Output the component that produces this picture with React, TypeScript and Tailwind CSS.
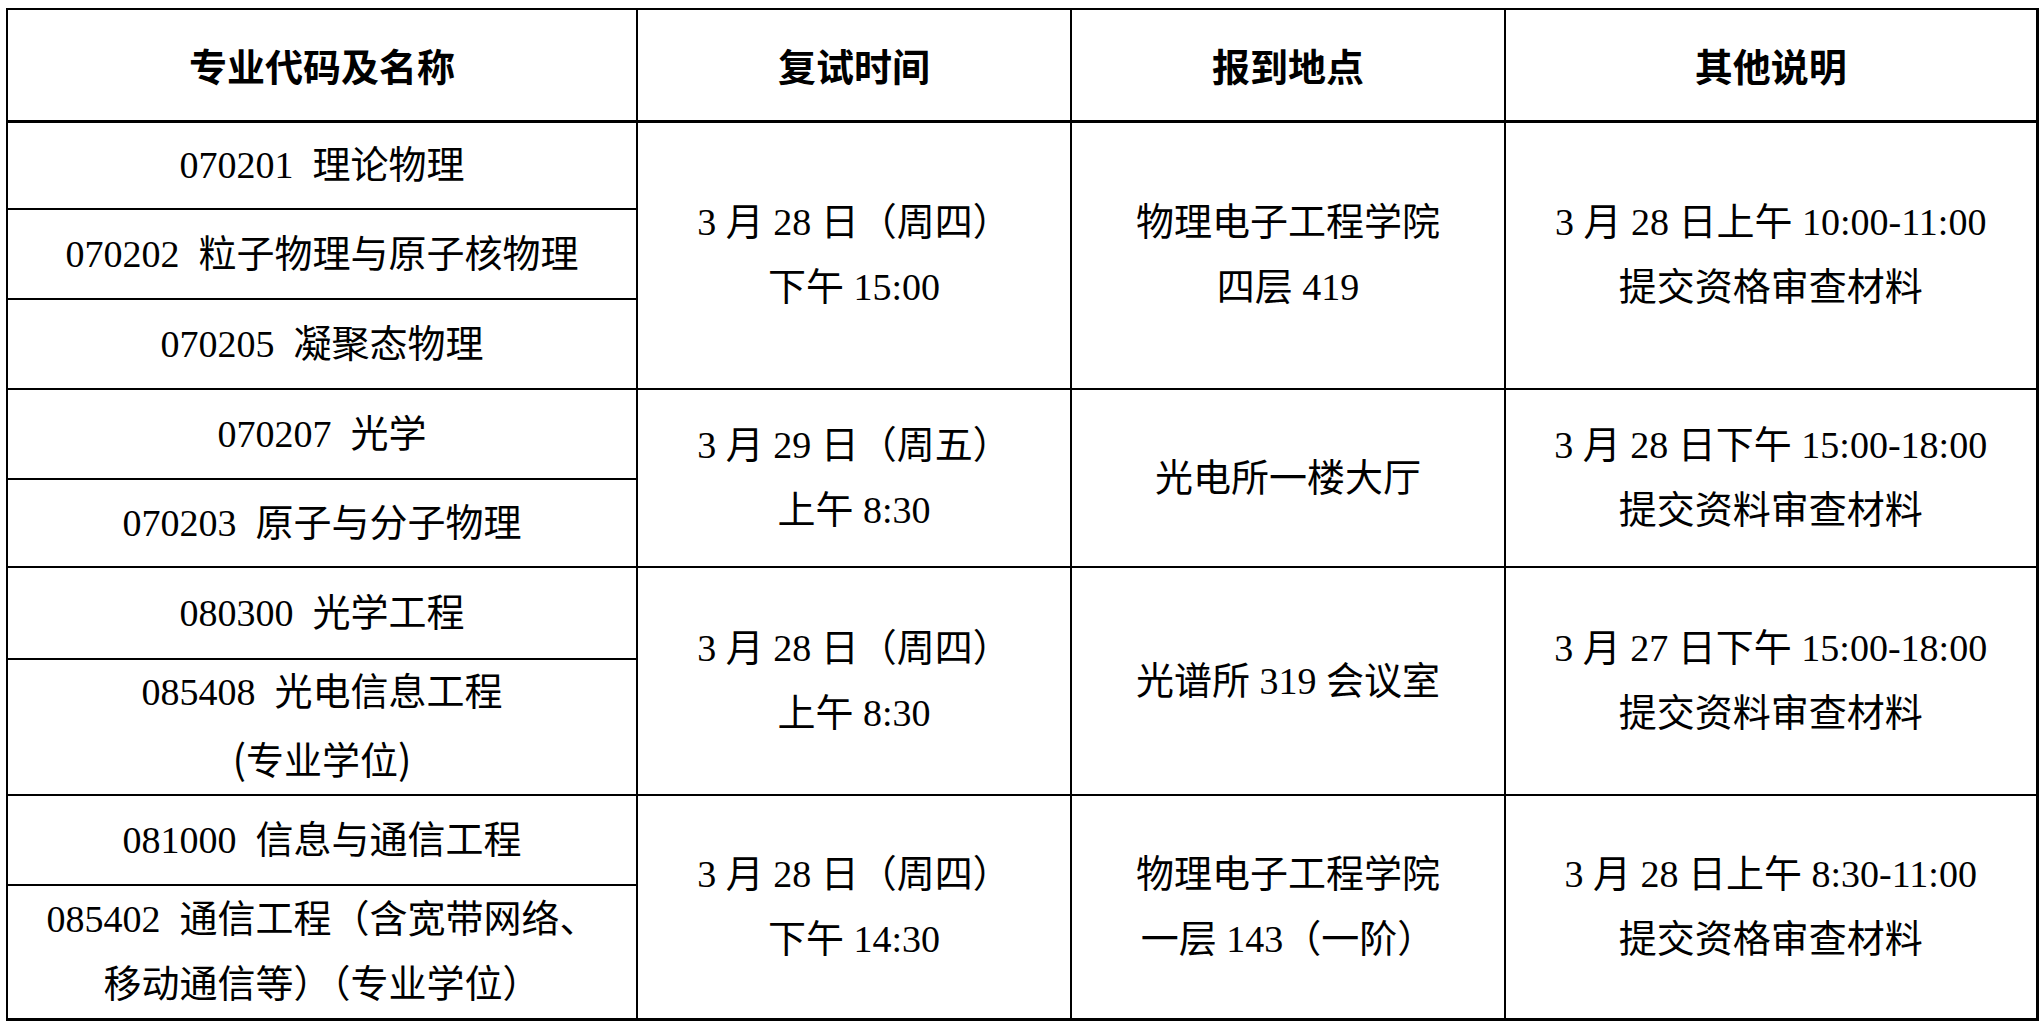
import React from "react";

const cell = "border-2 border-black p-0 align-middle text-center";
const head =
  "border-2 border-b-[3px] border-black p-0 align-middle text-center font-bold font-['Noto_Sans_CJK_SC',sans-serif]";

const groups = [
  {
    majors: [
      { h: "h-[88px]", text: ["070201\u00a0\u00a0理论物理"] },
      { h: "h-[90px]", text: ["070202\u00a0\u00a0粒子物理与原子核物理"] },
      { h: "h-[90px]", text: ["070205\u00a0\u00a0凝聚态物理"] },
    ],
    time: ["3 月 28 日（周四）", "下午 15:00"],
    place: ["物理电子工程学院", "四层 419"],
    note: ["3 月 28 日上午 10:00-11:00", "提交资格审查材料"],
  },
  {
    majors: [
      { h: "h-[90px]", text: ["070207\u00a0\u00a0光学"] },
      { h: "h-[88px]", text: ["070203\u00a0\u00a0原子与分子物理"] },
    ],
    time: ["3 月 29 日（周五）", "上午 8:30"],
    place: ["光电所一楼大厅"],
    note: ["3 月 28 日下午 15:00-18:00", "提交资料审查材料"],
  },
  {
    majors: [
      { h: "h-[92px]", text: ["080300\u00a0\u00a0光学工程"] },
      { h: "h-[134px]", text: ["085408\u00a0\u00a0光电信息工程", "(专业学位)"] },
    ],
    time: ["3 月 28 日（周四）", "上午 8:30"],
    place: ["光谱所 319 会议室"],
    note: ["3 月 27 日下午 15:00-18:00", "提交资料审查材料"],
  },
  {
    majors: [
      { h: "h-[90px]", text: ["081000\u00a0\u00a0信息与通信工程"] },
      {
        h: "h-[134px]",
        text: ["085402\u00a0\u00a0通信工程（含宽带网络、", "移动通信等）（专业学位）"],
      },
    ],
    time: ["3 月 28 日（周四）", "下午 14:30"],
    place: ["物理电子工程学院", "一层 143（一阶）"],
    note: ["3 月 28 日上午 8:30-11:00", "提交资格审查材料"],
  },
];

// half-width parens in the picture come from the hei font, not the serif one
const Line = ({ text }: { text: string }) => {
  const parts = text.split(/([()])/);
  return (
    <div className="whitespace-nowrap">
      {parts.map((p, i) =>
        p === "(" || p === ")" ? (
          <span key={i} className="font-['Noto_Sans_CJK_SC',sans-serif] text-[40px]">
            {p}
          </span>
        ) : (
          <React.Fragment key={i}>{p}</React.Fragment>
        )
      )}
    </div>
  );
};

const Lines = ({ lines }: { lines: string[] }) => (
  <>
    {lines.map((l, i) => (
      <Line key={i} text={l} />
    ))}
  </>
);

export default function App() {
  return (
    <div className="min-h-screen bg-white pt-[8px] pl-[6px]">
      <table className="w-[2030px] table-fixed border-collapse border-t-2 border-l-2 border-r-[3px] border-b-[3px] border-black text-black text-[38px] leading-[65px] font-['Liberation_Serif','Noto_Sans_CJK_SC',serif]">
        <colgroup>
          <col className="w-[630px]" />
          <col className="w-[434px]" />
          <col className="w-[434px]" />
          <col className="w-[532px]" />
        </colgroup>
        <thead>
          <tr className="h-[112px]">
            <th className={head}>专业代码及名称</th>
            <th className={head}>复试时间</th>
            <th className={head}>报到地点</th>
            <th className={head + " border-r-[3px]"}>其他说明</th>
          </tr>
        </thead>
        <tbody>
          {groups.map((g, gi) =>
            g.majors.map((m, mi) => (
              <tr key={gi + "-" + mi} className={m.h}>
                <td className={cell}>
                  <Lines lines={m.text} />
                </td>
                {mi === 0 && (
                  <>
                    <td className={cell} rowSpan={g.majors.length}>
                      <Lines lines={g.time} />
                    </td>
                    <td className={cell} rowSpan={g.majors.length}>
                      <Lines lines={g.place} />
                    </td>
                    <td className={cell + " border-r-[3px]"} rowSpan={g.majors.length}>
                      <Lines lines={g.note} />
                    </td>
                  </>
                )}
              </tr>
            ))
          )}
        </tbody>
      </table>
    </div>
  );
}
